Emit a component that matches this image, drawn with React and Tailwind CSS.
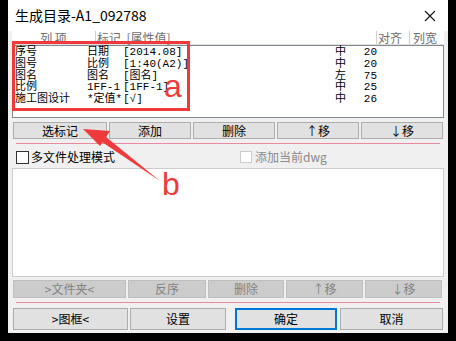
const rows = [
  ["序号", "日期", "[2014.08]", "中", "20"],
  ["图号", "比例", "[1:40(A2)]", "中", "20"],
  ["图名", "图名", "[图名]", "左", "75"],
  ["比例", "1FF-1", "[1FF-1]", "中", "25"],
  ["施工图设计", "*定值*", "[√]", "中", "26"],
]

const listFont = '"Liberation Mono", "Noto Sans CJK SC", monospace'

function Btn({ children, className = "" }) {
  return (
    <button className={`flex items-center justify-center border border-[#adadad] bg-[#e1e1e1] text-[12px] text-black ${className}`}>
      {children}
    </button>
  )
}

function DisBtn({ children, className = "" }) {
  return (
    <button className={`flex items-center justify-center border border-[#bfbfbf] bg-[#cccccc] text-[12px] text-[#838383] ${className}`}>
      {children}
    </button>
  )
}

export default function App() {
  return (
    <div
      className="relative w-[456px] h-[341px] bg-black pl-[8px] overflow-hidden"
      style={{ fontFamily: '"Noto Sans CJK SC", "Noto Sans", sans-serif' }}
    >
      <div className="w-[440px] h-[333px] bg-[#f0f0f0] flex flex-col">
        {/* title bar */}
        <div className="h-[31px] bg-white flex items-center justify-between pl-[7px] pr-[12px] shrink-0">
          <span className="text-[14px] text-black">生成目录-A1_092788</span>
          <svg width="12" height="12" viewBox="0 0 12 12">
            <path d="M1 1L11 11M11 1L1 11" stroke="#111" strokeWidth="1.1" />
          </svg>
        </div>

        <div className="px-[4px] flex flex-col">
          {/* list header */}
          <div className="h-[14px] flex bg-white text-[12px] leading-[13px] text-[#6d6d6d] border-b border-[#e0e0e0]">
            <div className="w-[84px] text-center border-r border-[#cfcfcf]">列 项</div>
            <div className="w-[281px] pl-[1px] border-r border-[#cfcfcf]">标记 &nbsp;[属性值]</div>
            <div className="w-[33px] pl-[1px] border-r border-[#cfcfcf]">对齐</div>
            <div className="flex-1 pl-[3px]">列宽</div>
          </div>
          {/* list */}
          <div
            className="h-[73px] bg-white border border-[#828790] pt-[1px] text-[11px] leading-[11.8px] text-black"
            style={{ fontFamily: listFont }}
          >
            {rows.map((r, i) => (
              <div key={i} className="flex whitespace-nowrap">
                <div className="w-[74px] pl-[2px]">{r[0]}</div>
                <div className="w-[36px]">{r[1]}</div>
                <div className="w-[212px]">{r[2]}</div>
                <div className="w-[28px]">{r[3]}</div>
                <div className="w-[14px] text-right">{r[4]}</div>
              </div>
            ))}
          </div>

          {/* buttons row 1 */}
          <div className="mt-[4px] h-[17px] flex gap-[2px] pl-[1px]">
            <Btn className="w-[94px]">选标记</Btn>
            <Btn className="w-[82px]">添加</Btn>
            <Btn className="w-[82px]">删除</Btn>
            <Btn className="w-[82px]">↑移</Btn>
            <Btn className="w-[82px]">↓移</Btn>
          </div>

          <div className="mt-[4px] mx-[4px] h-[1px] bg-[#e88aa0]" />

          {/* checkboxes */}
          <div className="mt-[5px] h-[16px] flex items-center text-[12px]">
            <div className="w-[13px] h-[13px] border border-[#333] bg-white ml-[4px]" />
            <span className="ml-[2px] text-black">多文件处理模式</span>
            <div className="w-[12px] h-[12px] border border-[#cccccc] bg-white ml-[125px]" />
            <span className="ml-[3px] text-[#8a8a8a]">添加当前dwg</span>
          </div>

          {/* white box */}
          <div className="mt-[3px] h-[109px] bg-white border border-[#cccccc]" />

          {/* buttons row 2 disabled */}
          <div className="mt-[3px] h-[18px] flex gap-[2px] pl-[1px]">
            <DisBtn className="w-[113px]">&gt;文件夹&lt;</DisBtn>
            <DisBtn className="w-[78px]">反序</DisBtn>
            <DisBtn className="w-[76px]">删除</DisBtn>
            <DisBtn className="w-[77px]">↑移</DisBtn>
            <DisBtn className="w-[77px]">↓移</DisBtn>
          </div>

          <div className="mt-[4px] mx-[4px] h-[1px] bg-[#e88aa0]" />

          {/* bottom buttons */}
          <div className="mt-[5px] h-[22px] flex pl-[1px]">
            <Btn className="w-[115px]">&gt;图框&lt;</Btn>
            <Btn className="w-[96px] ml-[2px]">设置</Btn>
            <Btn className="w-[102px] ml-[9px] !border-2 !border-[#0078d7]">确定</Btn>
            <Btn className="w-[103px] ml-[3px]">取消</Btn>
          </div>
        </div>
      </div>

      {/* annotation: red box a */}
      <div className="absolute left-[12px] top-[41px] w-[178px] h-[70px] border-[3px] border-[#ee3a3a] pointer-events-none" />
      <div className="absolute left-[164px] top-[70px] text-[32px] leading-[32px] text-[#ee3a3a]" style={{ fontFamily: '"Liberation Sans", Arial, sans-serif' }}>a</div>

      {/* annotation: arrow b */}
      <svg className="absolute left-0 top-0 pointer-events-none" width="456" height="341">
        <path d="M160 181 L102 142 L106 137 Z" fill="#ee3a3a" />
        <path d="M83 129 L110 131 L100 146 Z" fill="#ee3a3a" />
      </svg>
      <div className="absolute left-[162px] top-[168px] text-[32px] leading-[32px] text-[#ee3a3a]" style={{ fontFamily: '"Liberation Sans", Arial, sans-serif' }}>b</div>
    </div>
  )
}
